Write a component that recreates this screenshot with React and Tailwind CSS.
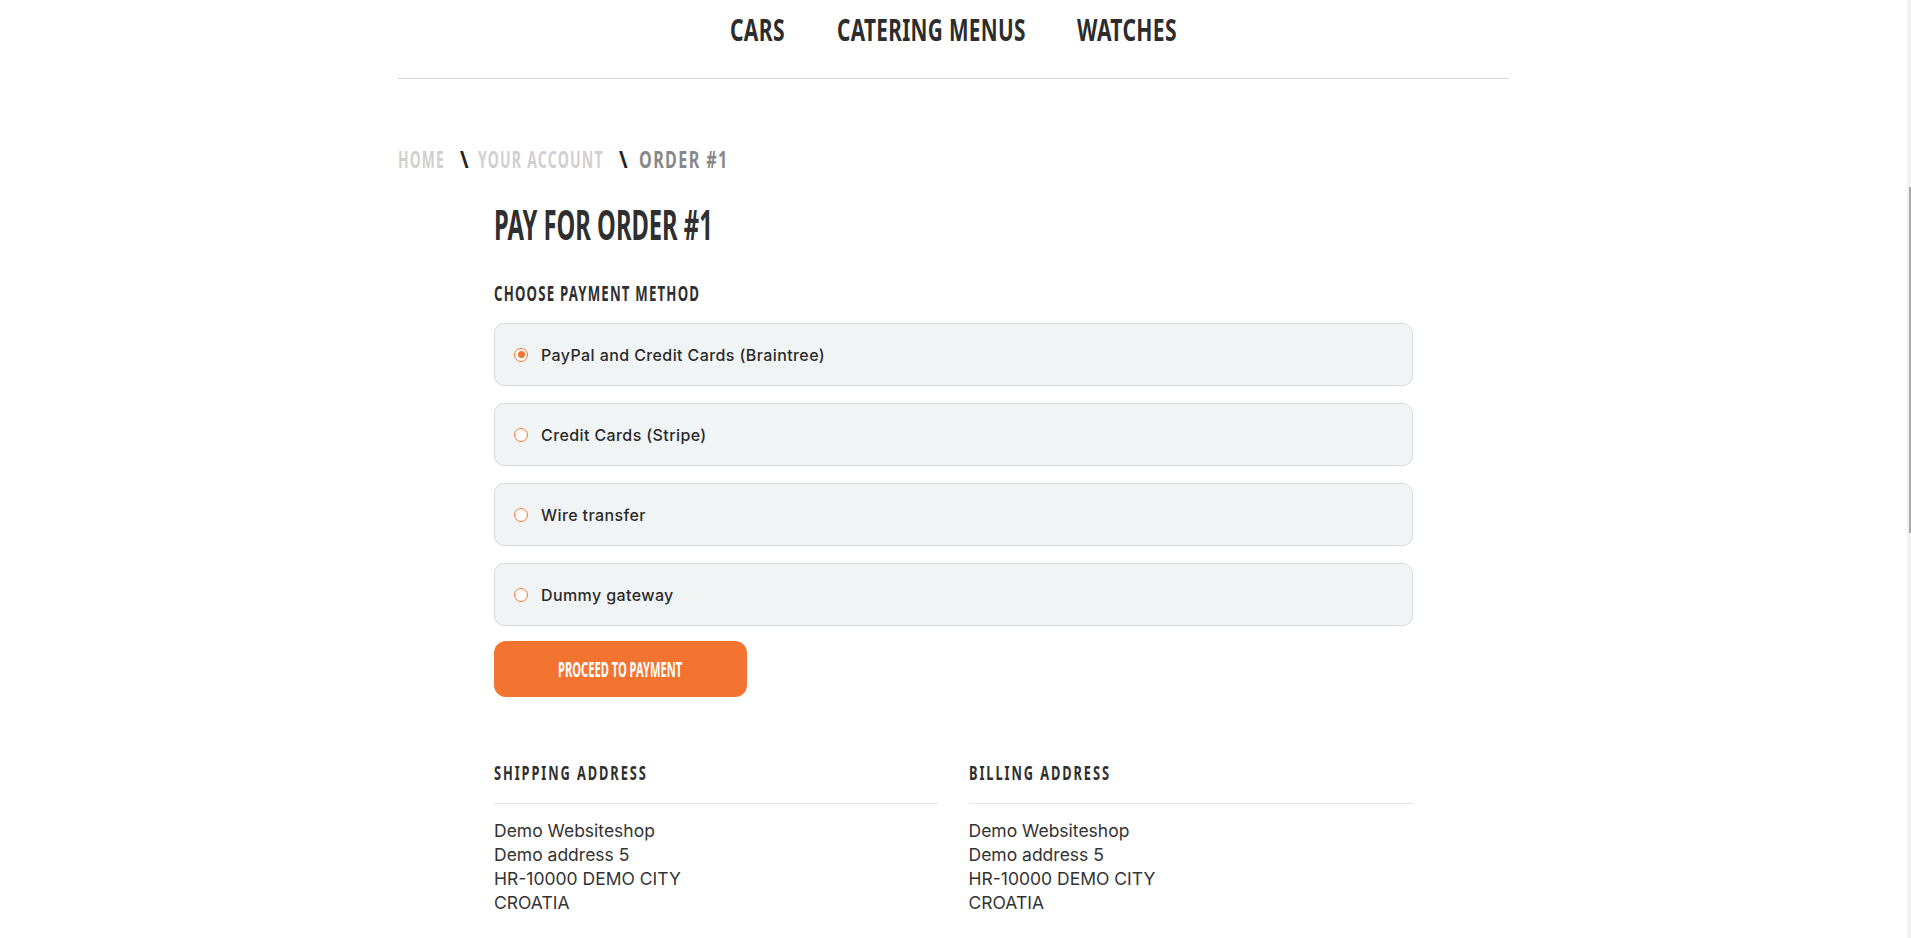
import React from "react";

const bebas = "font-['Noto_Sans','Open_Sans',sans-serif] font-bold uppercase whitespace-nowrap";
const body = "font-['Inter','Noto_Sans',sans-serif]";

function Sq({ outer = "", inner = "", children }) {
  return (
    <span className={`block ${outer}`}>
      <span className={`inline-block origin-left ${inner}`}>{children}</span>
    </span>
  );
}

function Radio({ checked }) {
  return (
    <span className="flex h-[14px] w-[14px] shrink-0 items-center justify-center rounded-full border-[1.5px] border-[#f37430] bg-white">
      {checked && <span className="h-[7px] w-[7px] rounded-full bg-[#f37430]" />}
    </span>
  );
}

const methods = [
  { label: "PayPal and Credit Cards (Braintree)", checked: true },
  { label: "Credit Cards (Stripe)", checked: false },
  { label: "Wire transfer", checked: false },
  { label: "Dummy gateway", checked: false },
];

function Address({ title }) {
  return (
    <div className="flex-1">
      <h3 className={`${bebas} text-[20px] leading-[28px] tracking-[3px] text-[#2f2f2f]`}>
        <Sq outer="w-[150px]" inner="scale-x-[0.64]">{title}</Sq>
      </h3>
      <div className="mt-[16px] border-t border-[#e5e5e5]" />
      <div className={`${body} mt-[15px] text-[17.5px] leading-[24px] text-[#333]`}>
        <p>Demo Websiteshop</p>
        <p>Demo address 5</p>
        <p>HR-10000 DEMO CITY</p>
        <p>CROATIA</p>
      </div>
    </div>
  );
}

export default function App() {
  return (
    <div className="flex h-[938px] w-full overflow-hidden bg-white">
      <div className="flex-1">
        <div className="mx-auto w-[1111px]">
          <header className="border-b border-[#d6d6d6] pb-[20px]">
            <nav className={`${bebas} flex h-[58px] items-center justify-center gap-[52px] text-[31px] leading-none tracking-[0.5px] text-[#2d2d2d]`}>
              <Sq outer="w-[55px]" inner="scale-x-[0.68]">Cars</Sq>
              <Sq outer="w-[188px]" inner="scale-x-[0.67]">Catering Menus</Sq>
              <Sq outer="w-[100px]" inner="scale-x-[0.68]">Watches</Sq>
            </nav>
          </header>

          <div className={`${bebas} mt-[68px] flex items-center text-[23px] leading-[24px] tracking-[2px]`}>
            <Sq outer="w-[46px] text-[#d0d0d0]" inner="scale-x-[0.6]">Home</Sq>
            <Sq outer="ml-[16px] w-[10px] text-[#222]" inner="scale-x-[0.9]">\</Sq>
            <Sq outer="ml-[8px] w-[125px] text-[#d0d0d0]" inner="scale-x-[0.61]">Your Account</Sq>
            <Sq outer="ml-[16px] w-[10px] text-[#222]" inner="scale-x-[0.9]">\</Sq>
            <Sq outer="ml-[10px] w-[88px] text-[#888]" inner="scale-x-[0.7]">Order #1</Sq>
          </div>

          <main className="mx-auto w-[919px]">
            <h1 className={`${bebas} mt-[31px] text-[42px] leading-[44px] text-[#2f2f2f]`}>
              <Sq outer="w-[217px]" inner="scale-x-[0.565]">Pay for order #1</Sq>
            </h1>
            <h2 className={`${bebas} mt-[34px] text-[22px] leading-[24px] tracking-[2px] text-[#2f2f2f]`}>
              <Sq outer="w-[205px]" inner="scale-x-[0.6]">Choose payment method</Sq>
            </h2>

            <div className="mt-[19px] flex flex-col gap-[17px]">
              {methods.map((m) => (
                <label
                  key={m.label}
                  className="flex h-[63px] items-center gap-[13px] rounded-[10px] border border-[#d9dcdd] bg-[#f1f4f5] pl-[19px]"
                >
                  <Radio checked={m.checked} />
                  <span className={`${body} text-[16px] font-medium tracking-[0.4px] text-[#2a2a2a]`}>{m.label}</span>
                </label>
              ))}
            </div>

            <button className={`${bebas} mt-[15px] flex h-[56px] w-[253px] items-center justify-center rounded-[12px] bg-[#f37430] text-[21px] leading-none text-white`}>
              <span className="inline-block scale-x-[0.53]">Proceed to payment</span>
            </button>

            <div className="mt-[62px] flex gap-[30px]">
              <Address title="Shipping address" />
              <Address title="Billing address" />
            </div>
          </main>
        </div>
      </div>
      <div className="flex w-[4px] flex-col bg-[#f1f1f1] pt-[187px]">
        <div className="ml-[2px] h-[346px] w-[2px] bg-[#a8a8a8]" />
      </div>
    </div>
  );
}
